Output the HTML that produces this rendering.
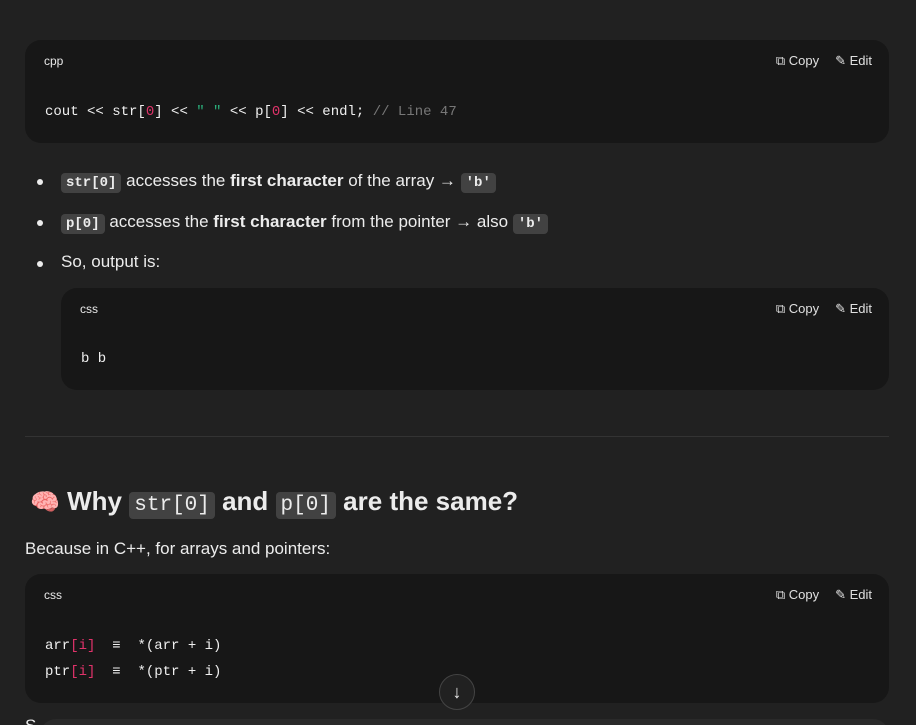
<!DOCTYPE html>
<html><head><meta charset="utf-8"><style>
*{margin:0;padding:0;box-sizing:border-box}
html,body{width:916px;height:725px;overflow:hidden}
body{background:#212121;color:#ececec;font-family:"Liberation Sans",sans-serif;position:relative}
.cb{position:absolute;background:#171717;border-radius:16px}
.lbl{position:absolute;left:19px;top:14px;font-size:12px;color:#e8e8e8}
.act{position:absolute;right:17px;top:13px;font-size:13px;color:#e0e0e0;display:flex;gap:16px}
.act span{display:flex;align-items:center;gap:4px}
.code{position:absolute;left:20px;font-family:"Liberation Mono",monospace;font-size:14px;color:#f0f0f0;white-space:pre}
.r{color:#e0336a}.g{color:#2bb07c}.c{color:#777}
.t{position:absolute;font-size:17px;white-space:nowrap}
.dot{position:absolute;width:6px;height:6px;border-radius:50%;background:#ececec}
.ic{display:inline-block;background:#424242;border-radius:4px;padding:2px 5px;font-family:"Liberation Mono",monospace;font-size:14px;font-weight:bold;letter-spacing:0}
</style></head><body>

<div class="cb" style="left:25px;top:40px;width:864px;height:103px">
<div class="lbl">cpp</div>
<div class="act"><span>⧉ Copy</span><span>✎ Edit</span></div>
<div class="code" style="top:64px">cout &lt;&lt; str[<span class="r">0</span>] &lt;&lt; <span class="g">" "</span> &lt;&lt; p[<span class="r">0</span>] &lt;&lt; endl; <span class="c">// Line 47</span></div>
</div>

<div class="dot" style="left:37px;top:179px"></div>
<div class="t" style="left:61px;top:171px"><span class="ic">str[0]</span> accesses the <b>first character</b> of the array → <span class="ic">'b'</span></div>
<div class="dot" style="left:37px;top:220px"></div>
<div class="t" style="left:61px;top:212px"><span class="ic">p[0]</span> accesses the <b>first character</b> from the pointer → also <span class="ic">'b'</span></div>
<div class="dot" style="left:37px;top:261px"></div>
<div class="t" style="left:61px;top:252px">So, output is:</div>

<div class="cb" style="left:61px;top:288px;width:828px;height:102px">
<div class="lbl">css</div>
<div class="act"><span>⧉ Copy</span><span>✎ Edit</span></div>
<div class="code" style="top:63px">b b</div>
</div>

<div style="position:absolute;left:25px;top:436px;width:864px;height:1px;background:#333"></div>

<div class="t" style="left:30px;top:486px;font-size:26px;font-weight:bold"><span style="font-size:24px">🧠</span> Why <span class="ic" style="font-size:21px;font-weight:normal;padding:2px 5px">str[0]</span> and <span class="ic" style="font-size:21px;font-weight:normal;padding:2px 5px">p[0]</span> are the same?</div>
<div class="t" style="left:25px;top:539px">Because in C++, for arrays and pointers:</div>

<div class="cb" style="left:25px;top:574px;width:864px;height:129px">
<div class="lbl">css</div>
<div class="act"><span>⧉ Copy</span><span>✎ Edit</span></div>
<div class="code" style="top:59px;line-height:26px">arr<span class="r">[i]</span>  ≡  *(arr + i)
ptr<span class="r">[i]</span>  ≡  *(ptr + i)</div>
</div>

<div style="position:absolute;left:439px;top:674px;width:36px;height:36px;border-radius:50%;background:#212121;border:1px solid #444;color:#eee;text-align:center;line-height:34px;font-size:18px">↓</div>

<div class="cb" style="left:40px;top:719px;width:849px;height:40px;background:#2a2a2a"></div>
<div class="t" style="left:25px;top:716px">S</div>
</body></html>
